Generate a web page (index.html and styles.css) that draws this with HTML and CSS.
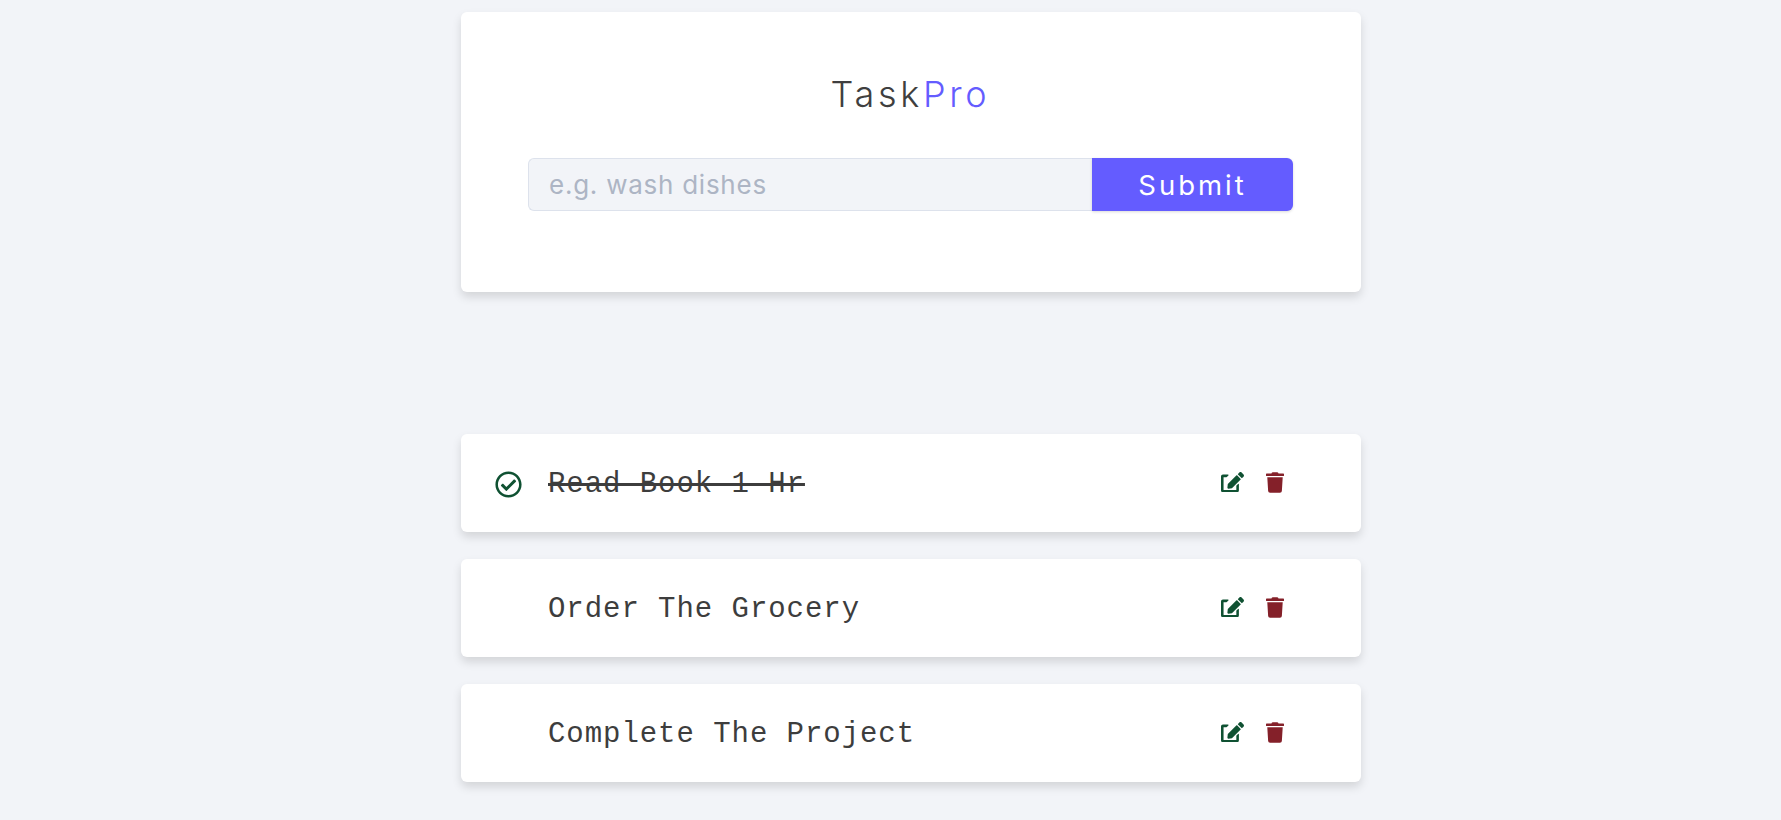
FILE: index.html
```html
<!DOCTYPE html>
<html>
<head>
  <meta charset="utf-8">
  <title>TaskPro</title>
  <link rel="stylesheet" href="styles.css">
</head>
<body>
<main class="page">
  <section class="card form-card">
    <h1 class="title">Task<span class="accent">Pro</span></h1>
    <form class="task-form">
      <input class="task-input" type="text" placeholder="e.g. wash dishes">
      <button class="submit-btn" type="button">Submit</button>
    </form>
  </section>

  <ul class="task-list">
    <li class="card task">
      <span class="task-check">
        <svg class="icon-check" viewBox="0 0 512 512"><path d="M256 8C119.033 8 8 119.033 8 256s111.033 248 248 248 248-111.033 248-248S392.967 8 256 8zm0 48c110.532 0 200 89.451 200 200 0 110.532-89.451 200-200 200-110.532 0-200-89.451-200-200 0-110.532 89.451-200 200-200m140.204 130.267l-22.536-22.718c-4.667-4.705-12.265-4.736-16.97-.068L215.346 303.697l-59.792-60.277c-4.667-4.705-12.265-4.736-16.97-.069l-22.719 22.536c-4.705 4.667-4.736 12.265-.068 16.971l90.781 91.516c4.667 4.705 12.265 4.736 16.97.068l172.589-171.204c4.704-4.668 4.734-12.266.067-16.971z"/></svg>
      </span>
      <span class="task-name done">Read Book 1 Hr</span>
      <span class="task-actions">
        <svg class="icon-edit" viewBox="0 0 576 512"><path d="M402.6 83.2l90.2 90.2c3.8 3.8 3.8 10 0 13.8L274.4 405.6l-92.8 10.3c-12.4 1.4-22.9-9.1-21.5-21.5l10.3-92.8L388.8 83.2c3.8-3.8 10-3.8 13.8 0zm162-22.9l-48.8-48.8c-15.2-15.2-39.9-15.2-55.2 0l-35.4 35.4c-3.8 3.8-3.8 10 0 13.8l90.2 90.2c3.8 3.8 10 3.8 13.8 0l35.4-35.4c15.2-15.3 15.2-40 0-55.2zM384 346.2V448H64V128h73.2c3.2 0 6.2-1.3 8.5-3.5l40-40c7.6-7.6 2.2-20.5-8.5-20.5H48C21.5 64 0 85.5 0 112v352c0 26.5 21.5 48 48 48h352c26.5 0 48-21.5 48-48V306.2c0-10.7-12.9-16-20.5-8.5l-40 40c-2.2 2.3-3.5 5.3-3.5 8.5z"/></svg>
        <svg class="icon-trash" viewBox="0 0 448 512"><path d="M432 32H312l-9.4-18.7A24 24 0 0 0 281.1 0H166.8a23.72 23.72 0 0 0-21.4 13.3L136 32H16A16 16 0 0 0 0 48v32a16 16 0 0 0 16 16h416a16 16 0 0 0 16-16V48a16 16 0 0 0-16-16zM53.2 467a48 48 0 0 0 47.9 45h245.8a48 48 0 0 0 47.9-45L416 128H32z"/></svg>
      </span>
    </li>
    <li class="card task">
      <span class="task-check"></span>
      <span class="task-name">Order The Grocery</span>
      <span class="task-actions">
        <svg class="icon-edit" viewBox="0 0 576 512"><path d="M402.6 83.2l90.2 90.2c3.8 3.8 3.8 10 0 13.8L274.4 405.6l-92.8 10.3c-12.4 1.4-22.9-9.1-21.5-21.5l10.3-92.8L388.8 83.2c3.8-3.8 10-3.8 13.8 0zm162-22.9l-48.8-48.8c-15.2-15.2-39.9-15.2-55.2 0l-35.4 35.4c-3.8 3.8-3.8 10 0 13.8l90.2 90.2c3.8 3.8 10 3.8 13.8 0l35.4-35.4c15.2-15.3 15.2-40 0-55.2zM384 346.2V448H64V128h73.2c3.2 0 6.2-1.3 8.5-3.5l40-40c7.6-7.6 2.2-20.5-8.5-20.5H48C21.5 64 0 85.5 0 112v352c0 26.5 21.5 48 48 48h352c26.5 0 48-21.5 48-48V306.2c0-10.7-12.9-16-20.5-8.5l-40 40c-2.2 2.3-3.5 5.3-3.5 8.5z"/></svg>
        <svg class="icon-trash" viewBox="0 0 448 512"><path d="M432 32H312l-9.4-18.7A24 24 0 0 0 281.1 0H166.8a23.72 23.72 0 0 0-21.4 13.3L136 32H16A16 16 0 0 0 0 48v32a16 16 0 0 0 16 16h416a16 16 0 0 0 16-16V48a16 16 0 0 0-16-16zM53.2 467a48 48 0 0 0 47.9 45h245.8a48 48 0 0 0 47.9-45L416 128H32z"/></svg>
      </span>
    </li>
    <li class="card task">
      <span class="task-check"></span>
      <span class="task-name">Complete The Project</span>
      <span class="task-actions">
        <svg class="icon-edit" viewBox="0 0 576 512"><path d="M402.6 83.2l90.2 90.2c3.8 3.8 3.8 10 0 13.8L274.4 405.6l-92.8 10.3c-12.4 1.4-22.9-9.1-21.5-21.5l10.3-92.8L388.8 83.2c3.8-3.8 10-3.8 13.8 0zm162-22.9l-48.8-48.8c-15.2-15.2-39.9-15.2-55.2 0l-35.4 35.4c-3.8 3.8-3.8 10 0 13.8l90.2 90.2c3.8 3.8 10 3.8 13.8 0l35.4-35.4c15.2-15.3 15.2-40 0-55.2zM384 346.2V448H64V128h73.2c3.2 0 6.2-1.3 8.5-3.5l40-40c7.6-7.6 2.2-20.5-8.5-20.5H48C21.5 64 0 85.5 0 112v352c0 26.5 21.5 48 48 48h352c26.5 0 48-21.5 48-48V306.2c0-10.7-12.9-16-20.5-8.5l-40 40c-2.2 2.3-3.5 5.3-3.5 8.5z"/></svg>
        <svg class="icon-trash" viewBox="0 0 448 512"><path d="M432 32H312l-9.4-18.7A24 24 0 0 0 281.1 0H166.8a23.72 23.72 0 0 0-21.4 13.3L136 32H16A16 16 0 0 0 0 48v32a16 16 0 0 0 16 16h416a16 16 0 0 0 16-16V48a16 16 0 0 0-16-16zM53.2 467a48 48 0 0 0 47.9 45h245.8a48 48 0 0 0 47.9-45L416 128H32z"/></svg>
      </span>
    </li>
  </ul>
</main>
</body>
</html>
```

FILE: styles.css
```css
* {
    box-sizing: border-box;
}
html, body {
    height: 100%;
    overflow: hidden;
}
body {
    margin: 0;
    background-color: #f2f4f8;
    color: #333;
}
.page {
    width: 900px;
    margin-left: 461px;
    padding-top: 12px;
}
.card {
    background-color: #fff;
    border-radius: 6px;
    box-shadow: 0 5px 10px rgba(0, 0, 0, 0.13);
}

.form-card {
    height: 280px;
    padding: 58px 68px 0 67px;
}
.title {
    margin: 0 0 40px;
    height: 48px;
    line-height: 48px;
    text-align: center;
    font-family: "Inter", sans-serif;
    font-size: 36px;
    font-weight: 300;
    letter-spacing: 3.7px;
    color: #3f3f3f;
}
.accent {
    color: #645cff;
}
.task-form {
    display: flex;
    height: 53px;
}
.task-input {
    flex: 1;
    min-width: 0;
    padding: 0 20px;
    border: 1px solid #dde2ec;
    border-right: none;
    border-radius: 6px 0 0 6px;
    background-color: #f2f4f8;
    font-family: "Inter", sans-serif;
    font-size: 26px;
    letter-spacing: 0.75px;
    color: #333;
}
.task-input::placeholder {
    color: #adb5c4;
    opacity: 1;
}
.submit-btn {
    width: 201px;
    padding: 0;
    border: none;
    border-radius: 0 6px 6px 0;
    background-color: #645cff;
    box-shadow: 0 1px 3px rgba(0, 0, 0, 0.15);
    font-family: "Inter", sans-serif;
    font-size: 27.5px;
    letter-spacing: 3px;
    color: #fff;
}

.task-list {
    list-style: none;
    margin: 142px 0 0;
    padding: 0;
}
.task {
    display: flex;
    align-items: center;
    height: 98px;
    margin-bottom: 27px;
    padding: 0 77px 0 34px;
}
.task-check {
    width: 26px;
    height: 26px;
    margin-top: 1px;
    margin-right: 27px;
}
.icon-check {
    display: block;
    width: 27px;
    height: 27px;
    fill: #0f5132;
}
.task-name {
    padding-top: 2px;
    font-family: "Liberation Mono", monospace;
    font-size: 29px;
    letter-spacing: 0.95px;
    color: #3d3d3d;
}
.done {
    text-decoration: line-through;
    text-decoration-thickness: 3px;
}
.task-actions {
    display: flex;
    align-items: center;
    gap: 22px;
    margin-left: auto;
    margin-top: -2px;
}
.icon-edit {
    display: block;
    width: 23px;
    height: 20.5px;
    fill: #0f5132;
}
.icon-trash {
    display: block;
    width: 18px;
    height: 21px;
    fill: #842029;
}
```
